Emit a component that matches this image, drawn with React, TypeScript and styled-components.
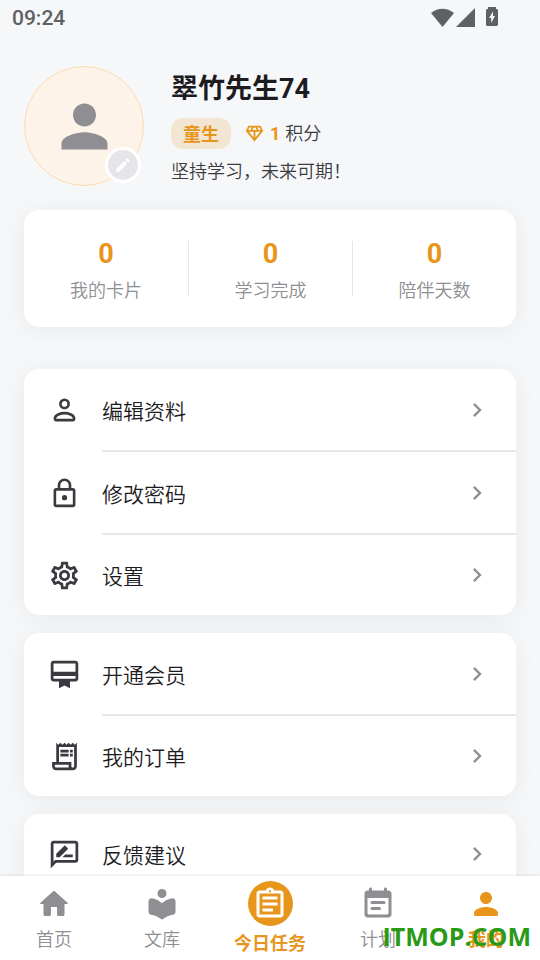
import React from 'react';
import styled, { createGlobalStyle, css } from 'styled-components';
import {
  MdChevronRight,
  MdEdit,
  MdOutlineCardMembership,
  MdOutlineDiamond,
  MdOutlineReceiptLong,
  MdOutlineSettings,
  MdPerson,
} from 'react-icons/md';

const color = {
  page: '#f6f7f9',
  accent: '#e8951b',
  ink: '#1c1c1e',
  icon: '#3a3a40',
  muted: '#8e8e93',
  line: '#e5e5ea',
  status: '#5f6063',
};

const GlobalStyle = createGlobalStyle`
  *, *::before, *::after { box-sizing: border-box; }
  body {
    margin: 0;
    background: ${color.page};
    color: ${color.ink};
    font-family: Roboto, "Noto Sans CJK SC", sans-serif;
  }
  h1, p, ul, dl, dd { margin: 0; padding: 0; }
  ul { list-style: none; }
  button { font: inherit; border: 0; padding: 0; background: none; cursor: pointer; }
  a { color: inherit; text-decoration: none; }
  svg { display: block; flex-shrink: 0; }
`;

const Screen = styled.div`
  height: 100vh;
  display: flex;
  flex-direction: column;
  overflow: hidden;
`;

const StatusBar = styled.header`
  display: flex;
  align-items: center;
  justify-content: space-between;
  height: 36px;
  padding: 0 42px 0 12px;
  font-size: 21px;
  line-height: 36px;
  font-weight: 500;
  color: ${color.status};
`;

const StatusIcons = styled.div`
  display: flex;
  align-items: center;
  height: 34px;
`;

const Content = styled.main`
  flex: 1;
  min-height: 0;
  overflow-y: auto;
  scrollbar-width: none;
  padding: 30px 24px 0;
`;

const Profile = styled.section`
  display: flex;
  gap: 27px;
`;

const Avatar = styled.div`
  position: relative;
  display: grid;
  place-items: center;
  width: 120px;
  height: 120px;
  flex-shrink: 0;
  border: 1px solid #fbdcb2;
  border-radius: 50%;
  background: #fef3e9;
  color: ${color.muted};
`;

const EditButton = styled.button`
  position: absolute;
  right: 2px;
  bottom: 2px;
  display: grid;
  place-items: center;
  width: 36px;
  height: 36px;
  border: 3px solid #fff;
  border-radius: 50%;
  background: ${color.line};
  color: #fff;
`;

const ProfileText = styled.div`
  display: flex;
  flex-direction: column;
  align-items: flex-start;
`;

const Name = styled.h1`
  font-size: 27px;
  line-height: 32px;
  font-weight: 700;
  margin-top: 7px;
`;

const Meta = styled.div`
  display: flex;
  align-items: center;
  gap: 13px;
  margin-top: 13px;
`;

const Rank = styled.span`
  padding: 3px 12px 0;
  border-radius: 12px;
  background: #f2e5d2;
  color: ${color.accent};
  font-size: 18px;
  line-height: 28px;
  font-weight: 700;
`;

const Points = styled.span`
  display: flex;
  align-items: center;
  gap: 5px;
  color: ${color.icon};
  font-size: 18px;
  line-height: 28px;
  font-weight: 350;

  svg, strong { color: ${color.accent}; }
  strong { font-weight: 700; }
`;

const Motto = styled.p`
  margin-top: 9px;
  color: ${color.icon};
  font-size: 18px;
  line-height: 28px;
  font-weight: 350;
`;

const Card = styled.section`
  border-radius: 15px;
  background: #fff;
  box-shadow: 0 3px 24px rgba(0, 0, 0, 0.06);
`;

const Stats = styled(Card).attrs({ as: 'dl' })`
  display: grid;
  grid-template-columns: repeat(3, 1fr);
  margin-top: 24px;
  padding: 31px 0;
`;

const Stat = styled.div`
  display: flex;
  flex-direction: column-reverse;
  justify-content: center;
  align-items: center;
  height: 55px;
  padding-top: 8px;

  & + & { border-left: 1px solid ${color.line}; }

  dt {
    margin-top: 9px;
    color: ${color.muted};
    font-size: 18px;
    line-height: 27px;
    font-weight: 350;
  }
  dd {
    color: ${color.accent};
    font-size: 27px;
    line-height: 27px;
    font-weight: 700;
  }
`;

const Groups = styled.nav`
  display: flex;
  flex-direction: column;
  gap: 18px;
  margin-top: 42px;
`;

const MenuItem = styled.li``;

const MenuRow = styled.button`
  display: flex;
  align-items: stretch;
  width: 100%;
  height: 83px;
  padding-left: 24px;
  color: ${color.icon};
  text-align: left;

  ${MenuItem}:last-child & { height: 80px; }
  > svg { align-self: center; }
`;

const RowBody = styled.span`
  flex: 1;
  display: flex;
  align-items: center;
  justify-content: space-between;
  margin-left: 21px;
  padding-right: 25px;
  color: ${color.ink};
  font-size: 21px;
  font-weight: 350;
  border-bottom: 2px solid #e8e8ec;

  ${MenuItem}:last-child & { border-bottom: 0; }
  svg { color: ${color.muted}; }
`;

const TabBar = styled.nav`
  position: relative;
  display: grid;
  grid-template-columns: repeat(5, 1fr);
  height: 84px;
  background: #fff;
  box-shadow: 0 -1px 2px rgba(0, 0, 0, 0.08);
`;

const Tab = styled.a<{ $active?: boolean; $featured?: boolean }>`
  display: flex;
  flex-direction: column;
  align-items: center;
  padding-top: 10px;
  gap: 4px;
  color: ${color.muted};
  font-size: 18px;
  line-height: 27px;
  font-weight: 350;

  ${({ $active, $featured }) =>
    ($active || $featured) &&
    css`
      color: ${color.accent};
      font-weight: 700;
    `}
  ${({ $featured }) =>
    $featured &&
    css`
      padding-top: 5px;
    `}
`;

const FeaturedIcon = styled.span`
  display: grid;
  place-items: center;
  width: 45px;
  height: 45px;
  border-radius: 50%;
  background: ${color.accent};
  color: #fff;
`;

const SiteMark = styled.span`
  position: absolute;
  right: 9px;
  bottom: 6px;
  color: #2a9a16;
  font-family: "Open Sans", sans-serif;
  font-size: 25px;
  line-height: 36px;
  font-weight: 700;
  pointer-events: none;
`;

type GlyphProps = { size: number; children: React.ReactNode };
const Glyph = ({ size, children }: GlyphProps) => (
  <svg width={size} height={size} viewBox="0 0 24 24" fill="currentColor" aria-hidden="true">
    {children}
  </svg>
);

const PersonOutline = () => (
  <Glyph size={33}>
    <g fill="none" stroke="currentColor" strokeWidth="1.9">
      <circle cx="12" cy="7.2" r="3" />
      <path d="M5 17.9c0-2.7 4.2-4 7-4s7 1.3 7 4c0 .7-.3 1.1-.9 1.1H5.9c-.6 0-.9-.4-.9-1.1z" />
    </g>
  </Glyph>
);

const LockOutline = () => (
  <Glyph size={33}>
    <g fill="none" stroke="currentColor" strokeWidth="1.9">
      <rect x="5" y="9" width="14" height="12" rx="1" />
      <path d="M8 9V6a4 4 0 0 1 8 0v3" />
    </g>
    <circle cx="12" cy="15" r="1.9" />
  </Glyph>
);

const Feedback = () => (
  <Glyph size={33}>
    <path d="M20 2H4c-1.1 0-1.99.9-1.99 2L2 22l4-4h14c1.1 0 2-.9 2-2V4c0-1.1-.9-2-2-2zm0 14H5.17L4 17.17V4h16v12z" />
    <path d="M10.5 14H18v-2h-5.5zM14.36 8.13c.2-.2.2-.51 0-.71l-1.77-1.77c-.2-.2-.51-.2-.71 0L6 11.53V14h2.47l5.89-5.87z" />
  </Glyph>
);

const HomeIcon = () => (
  <Glyph size={36}>
    <path d="M10 19v-5h4v5c0 .55.45 1 1 1h3c.55 0 1-.45 1-1v-7h1.7c.46 0 .68-.57.33-.87L12.67 3.6c-.38-.34-.96-.34-1.34 0l-8.36 7.53c-.34.3-.13.87.33.87H5v7c0 .55.45 1 1 1h3c.55 0 1-.45 1-1z" />
  </Glyph>
);

const LibraryIcon = () => (
  <Glyph size={36}>
    <circle cx="12" cy="5" r="3" />
    <path d="M12 11.55c-1.82-1.7-4.12-2.89-6.68-3.35C4.11 7.99 3 8.95 3 10.18v6.24c0 1.68.72 2.56 1.71 2.69 2.5.34 4.72 1.38 6.51 2.87.43.36 1.14.36 1.57 0 1.79-1.49 4.02-2.53 6.51-2.87.98-.14 1.7-1.01 1.7-2v-6.93c0-1.23-1.11-2.19-2.32-1.98-2.56.46-4.86 1.65-6.68 3.35z" />
  </Glyph>
);

const ClipboardIcon = () => (
  <Glyph size={36}>
    <path d="M7 15h7v2H7zm0-4h10v2H7zm0-4h10v2H7zm12-4h-4.18C14.4 1.84 13.3 1 12 1c-1.3 0-2.4.84-2.82 2H5c-1.1 0-2 .9-2 2v14c0 1.1.9 2 2 2h14c1.1 0 2-.9 2-2V5c0-1.1-.9-2-2-2zm-7-.25c.41 0 .75.34.75.75s-.34.75-.75.75-.75-.34-.75-.75.34-.75.75-.75zM19 19H5V5h14v14z" />
  </Glyph>
);

const PlanIcon = () => (
  <Glyph size={36}>
    <path
      fillRule="evenodd"
      d="M19 3h-1V2c0-.55-.45-1-1-1s-1 .45-1 1v1H8V2c0-.55-.45-1-1-1s-1 .45-1 1v1H5c-1.1 0-2 .9-2 2v14c0 1.1.9 2 2 2h14c1.1 0 2-.9 2-2V5c0-1.1-.9-2-2-2zm-1 16H6c-.55 0-1-.45-1-1V8h14v10c0 .55-.45 1-1 1z"
    />
    <rect x="7" y="10" width="10" height="2" rx="1" />
    <rect x="7" y="14" width="7" height="2" rx="1" />
  </Glyph>
);

const ProfileIcon = () => (
  <Glyph size={36}>
    <path d="M12 12c2.21 0 4-1.79 4-4s-1.79-4-4-4-4 1.79-4 4 1.79 4 4 4zm0 2c-2.67 0-8 1.34-8 4v1c0 .55.45 1 1 1h14c.55 0 1-.45 1-1v-1c0-2.66-5.33-4-8-4z" />
  </Glyph>
);

const SignalIcons = () => (
  <svg width="68" height="22" viewBox="0 0 68 22" fill={color.status} aria-hidden="true">
    <path d="M1 6C8 .3 17 .3 24 6L12.5 20z" />
    <path d="M45 1v19H26z" />
    <path
      fillRule="evenodd"
      d="M58 2V0h8v2h.5c.8 0 1.5.7 1.5 1.5v14c0 .8-.7 1.5-1.5 1.5h-9c-.8 0-1.5-.7-1.5-1.5v-14c0-.8.7-1.5 1.5-1.5zM63 4.5 59 11h2.2v5L65 9h-2z"
    />
  </svg>
);

const groups = [
  [
    { label: '编辑资料', icon: <PersonOutline /> },
    { label: '修改密码', icon: <LockOutline /> },
    { label: '设置', icon: <MdOutlineSettings size={33} /> },
  ],
  [
    { label: '开通会员', icon: <MdOutlineCardMembership size={33} /> },
    { label: '我的订单', icon: <MdOutlineReceiptLong size={33} /> },
  ],
  [{ label: '反馈建议', icon: <Feedback /> }],
];

const stats = ['我的卡片', '学习完成', '陪伴天数'];

export default function App() {
  return (
    <Screen>
      <GlobalStyle />
      <StatusBar>
        <span>09:24</span>
        <StatusIcons>
          <SignalIcons />
        </StatusIcons>
      </StatusBar>
      <Content>
        <Profile>
          <Avatar>
            <MdPerson size={69} />
            <EditButton aria-label="编辑">
              <MdEdit size={18} />
            </EditButton>
          </Avatar>
          <ProfileText>
            <Name>翠竹先生74</Name>
            <Meta>
              <Rank>童生</Rank>
              <Points>
                <MdOutlineDiamond size={21} />
                <strong>1</strong>
                <span>积分</span>
              </Points>
            </Meta>
            <Motto>坚持学习，未来可期！</Motto>
          </ProfileText>
        </Profile>
        <Stats>
          {stats.map((label) => (
            <Stat key={label}>
              <dt>{label}</dt>
              <dd>0</dd>
            </Stat>
          ))}
        </Stats>
        <Groups>
          {groups.map((items) => (
            <Card as="ul" key={items[0].label}>
              {items.map(({ label, icon }) => (
                <MenuItem key={label}>
                  <MenuRow type="button">
                    {icon}
                    <RowBody>
                      {label}
                      <MdChevronRight size={28} />
                    </RowBody>
                  </MenuRow>
                </MenuItem>
              ))}
            </Card>
          ))}
        </Groups>
      </Content>
      <TabBar>
        <Tab href="#home">
          <HomeIcon />
          首页
        </Tab>
        <Tab href="#library">
          <LibraryIcon />
          文库
        </Tab>
        <Tab href="#today" $featured>
          <FeaturedIcon>
            <ClipboardIcon />
          </FeaturedIcon>
          今日任务
        </Tab>
        <Tab href="#plan">
          <PlanIcon />
          计划
        </Tab>
        <Tab href="#me" $active aria-current="page">
          <ProfileIcon />
          我的
        </Tab>
        <SiteMark>ITMOP.COM</SiteMark>
      </TabBar>
    </Screen>
  );
}
